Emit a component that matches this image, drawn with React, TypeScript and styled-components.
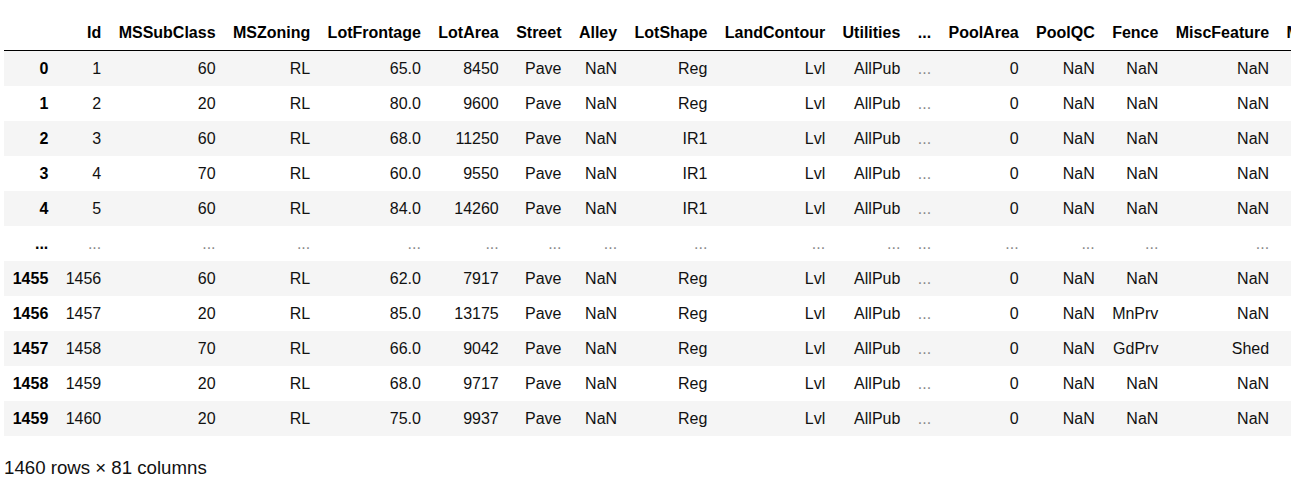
import React from "react";
import styled, { createGlobalStyle } from "styled-components";

const GlobalStyle = createGlobalStyle`
  html, body {
    margin: 0;
    padding: 0;
    background: #ffffff;
  }
  body {
    font-family: "Liberation Sans", Arial, sans-serif;
    color: #000;
  }
`;

const Output = styled.div`
  padding: 15px 0 0 4px;
  width: 1287px;
  overflow: hidden;
`;

const Scroller = styled.div`
  overflow: hidden;
  width: 100%;
`;

const Table = styled.table`
  border: none;
  border-collapse: collapse;
  border-spacing: 0;
  color: #000;
  font-size: 16px;
  font-family: "Liberation Sans", Arial, sans-serif;
`;

const Head = styled.thead`
  border-bottom: 1px solid #000;
  vertical-align: bottom;
`;

const Row = styled.tr<{ $striped?: boolean }>`
  background: ${(p) => (p.$striped ? "#f5f5f5" : "transparent")};
`;

const HeadCell = styled.th`
  text-align: right;
  vertical-align: middle;
  padding: 8px 8.7px;
  line-height: 19px;
  font-weight: bold;
  white-space: nowrap;
`;

const IndexCell = styled.th`
  text-align: right;
  vertical-align: middle;
  padding: 8px 8.7px;
  line-height: 19px;
  font-weight: bold;
  white-space: nowrap;
`;

const Cell = styled.td<{ $muted?: boolean }>`
  text-align: right;
  vertical-align: middle;
  padding: 8px 8.7px;
  line-height: 19px;
  white-space: nowrap;
  color: ${(p) => (p.$muted ? "#8a8a8a" : "#111")};
`;

const Footer = styled.p`
  margin: 21px 0 0 0;
  font-size: 18.67px;
  line-height: 22px;
  color: #111;
`;

const columns = [
  "Id", "MSSubClass", "MSZoning", "LotFrontage", "LotArea", "Street", "Alley",
  "LotShape", "LandContour", "Utilities", "...", "PoolArea", "PoolQC", "Fence",
  "MiscFeature", "MiscVal", "MoSold", "YrSold", "SaleType", "SaleCondition", "SalePrice",
];

type RowData = { index: string; values: string[] };

const rows: RowData[] = [
  { index: "0", values: ["1", "60", "RL", "65.0", "8450", "Pave", "NaN", "Reg", "Lvl", "AllPub", "...", "0", "NaN", "NaN", "NaN", "0", "2", "2008", "WD", "Normal", "208500"] },
  { index: "1", values: ["2", "20", "RL", "80.0", "9600", "Pave", "NaN", "Reg", "Lvl", "AllPub", "...", "0", "NaN", "NaN", "NaN", "0", "5", "2007", "WD", "Normal", "181500"] },
  { index: "2", values: ["3", "60", "RL", "68.0", "11250", "Pave", "NaN", "IR1", "Lvl", "AllPub", "...", "0", "NaN", "NaN", "NaN", "0", "9", "2008", "WD", "Normal", "223500"] },
  { index: "3", values: ["4", "70", "RL", "60.0", "9550", "Pave", "NaN", "IR1", "Lvl", "AllPub", "...", "0", "NaN", "NaN", "NaN", "0", "2", "2006", "WD", "Abnorml", "140000"] },
  { index: "4", values: ["5", "60", "RL", "84.0", "14260", "Pave", "NaN", "IR1", "Lvl", "AllPub", "...", "0", "NaN", "NaN", "NaN", "0", "12", "2008", "WD", "Normal", "250000"] },
  { index: "...", values: Array(21).fill("...") },
  { index: "1455", values: ["1456", "60", "RL", "62.0", "7917", "Pave", "NaN", "Reg", "Lvl", "AllPub", "...", "0", "NaN", "NaN", "NaN", "0", "8", "2007", "WD", "Normal", "175000"] },
  { index: "1456", values: ["1457", "20", "RL", "85.0", "13175", "Pave", "NaN", "Reg", "Lvl", "AllPub", "...", "0", "NaN", "MnPrv", "NaN", "0", "2", "2010", "WD", "Normal", "210000"] },
  { index: "1457", values: ["1458", "70", "RL", "66.0", "9042", "Pave", "NaN", "Reg", "Lvl", "AllPub", "...", "0", "NaN", "GdPrv", "Shed", "2500", "5", "2010", "WD", "Normal", "266500"] },
  { index: "1458", values: ["1459", "20", "RL", "68.0", "9717", "Pave", "NaN", "Reg", "Lvl", "AllPub", "...", "0", "NaN", "NaN", "NaN", "0", "4", "2010", "WD", "Normal", "142125"] },
  { index: "1459", values: ["1460", "20", "RL", "75.0", "9937", "Pave", "NaN", "Reg", "Lvl", "AllPub", "...", "0", "NaN", "NaN", "NaN", "0", "6", "2008", "WD", "Normal", "147500"] },
];

export default function App() {
  return (
    <>
      <GlobalStyle />
      <Output>
        <Scroller>
          <Table>
            <Head>
              <tr>
                <HeadCell></HeadCell>
                {columns.map((c, i) => (
                  <HeadCell key={i}>{c}</HeadCell>
                ))}
              </tr>
            </Head>
            <tbody>
              {rows.map((r, i) => (
                <Row key={i} $striped={i % 2 === 0}>
                  <IndexCell>{r.index}</IndexCell>
                  {r.values.map((v, j) => (
                    <Cell key={j} $muted={v === "..."}>{v}</Cell>
                  ))}
                </Row>
              ))}
            </tbody>
          </Table>
        </Scroller>
        <Footer>1460 rows × 81 columns</Footer>
      </Output>
    </>
  );
}
